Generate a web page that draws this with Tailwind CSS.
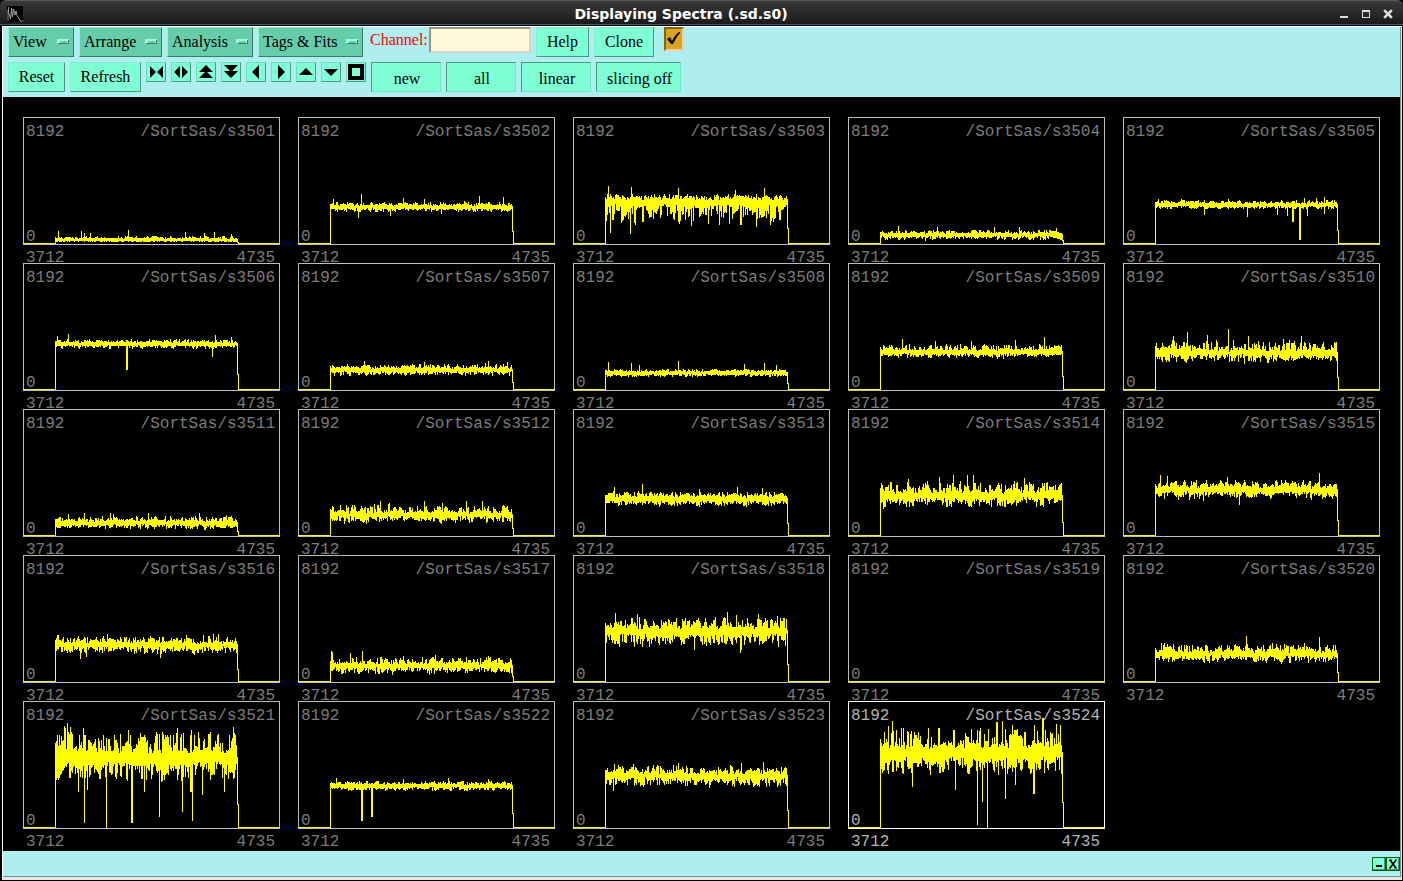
<!DOCTYPE html>
<html lang="en">
<head>
  <meta charset="UTF-8" />
  <meta name="viewport" content="width=device-width, initial-scale=1.0"/>
  <title>Displaying Spectra (.sd.s0)</title>
  <script src="https://cdn.jsdelivr.net/npm/@tailwindcss/browser@4"></script>
</head>
<body class="bg-black min-h-screen flex flex-col font-['Liberation_Serif',serif] text-[16px] text-black">

  <!-- Title bar -->
  <header class="h-[26px] flex items-center pl-[7px] pr-[10px] rounded-t-md border-t border-[#5a5a5a] bg-linear-to-b from-[#3a3a3a] to-[#181818] shadow-[inset_0_-1px_0_#000,inset_0_-2px_0_#3f5878]">
    <svg class="w-4 h-4" viewBox="0 0 16 16">
      <rect width="16" height="16" fill="#000"/>
      <path d="M1 15V4M1.500 1V6L3.500 13L4.500 2L5.500 11L6.500 3L8 9L9 5L10 10L12 12L13 15H16" fill="none" stroke="#bbb" stroke-width="0.800"/>
    </svg>
    <h1 class="flex-1 text-center text-white font-bold text-[14px] leading-5 font-['DejaVu_Sans',sans-serif]">Displaying Spectra (.sd.s0)</h1>
    <div class="flex gap-3">
      <button aria-label="Minimize">
        <svg class="w-[10px] h-[10px]" viewBox="0 0 10 10" shape-rendering="crispEdges"><path d="M1 7h8v2H1z" fill="#ddd"/></svg>
      </button>
      <button aria-label="Maximize">
        <svg class="w-[10px] h-[10px]" viewBox="0 0 10 10" shape-rendering="crispEdges"><path d="M1 1h8v8H1zM2 3v5h6V3z" fill="#ddd" fill-rule="evenodd"/></svg>
      </button>
      <button aria-label="Close">
        <svg class="w-[10px] h-[10px]" viewBox="0 0 10 10"><path d="M2 2l6 6M8 2l-6 6" stroke="#ddd" stroke-width="2.500" stroke-linecap="square"/></svg>
      </button>
    </div>
  </header>

  <div class="flex-1 flex flex-col ml-[2px] mr-px mb-px border-t border-l border-t-white border-l-white border-r border-r-[#e8e8e8] border-b-3 border-b-[#e8e8e8]">
    <div class="flex-1 flex flex-col border-r border-b border-[#6c9292] bg-[#afeeee]">

      <!-- Toolbar -->
      <div class="pl-[5px] pb-[5px] flex flex-col gap-[5px]">
        <div class="flex gap-[5px] items-start">
          <button class="h-[30px] w-[66px] pl-1 pr-1 flex items-center justify-between bg-[#66cdaa] border border-t-[#8fe6ca] border-l-[#a3f0d8] border-b-[#3d7b66] border-r-[#3d7b66]">View
            <svg class="w-3 h-[6px]" viewBox="0 0 12 6" shape-rendering="crispEdges"><path d="M0 0h12v5H0z" fill="#a3f5e8"/><path d="M3 2h7v2H3z" fill="#66cdaa"/><path d="M11 1h1v4H1V4h10z" fill="#3d7b66"/></svg>
          </button>
          <button class="h-[30px] w-[83px] pl-1 pr-1 flex items-center justify-between bg-[#66cdaa] border border-t-[#8fe6ca] border-l-[#a3f0d8] border-b-[#3d7b66] border-r-[#3d7b66]">Arrange
            <svg class="w-3 h-[6px]" viewBox="0 0 12 6" shape-rendering="crispEdges"><path d="M0 0h12v5H0z" fill="#a3f5e8"/><path d="M3 2h7v2H3z" fill="#66cdaa"/><path d="M11 1h1v4H1V4h10z" fill="#3d7b66"/></svg>
          </button>
          <button class="h-[30px] w-[86px] pl-1 pr-1 flex items-center justify-between bg-[#66cdaa] border border-t-[#8fe6ca] border-l-[#a3f0d8] border-b-[#3d7b66] border-r-[#3d7b66]">Analysis
            <svg class="w-3 h-[6px]" viewBox="0 0 12 6" shape-rendering="crispEdges"><path d="M0 0h12v5H0z" fill="#a3f5e8"/><path d="M3 2h7v2H3z" fill="#66cdaa"/><path d="M11 1h1v4H1V4h10z" fill="#3d7b66"/></svg>
          </button>
          <button class="h-[30px] w-[105px] pl-1 pr-1 flex items-center justify-between bg-[#66cdaa] border border-t-[#8fe6ca] border-l-[#a3f0d8] border-b-[#3d7b66] border-r-[#3d7b66]">Tags &amp; Fits
            <svg class="w-3 h-[6px]" viewBox="0 0 12 6" shape-rendering="crispEdges"><path d="M0 0h12v5H0z" fill="#a3f5e8"/><path d="M3 2h7v2H3z" fill="#66cdaa"/><path d="M11 1h1v4H1V4h10z" fill="#3d7b66"/></svg>
          </button>
          <div class="flex items-center w-[163px] pl-[2px] justify-between">
            <label for="channel" class="text-[#ff0000]">Channel:</label>
            <input id="channel" type="text" class="h-[26px] w-[102px] px-1 bg-[#fff8dc] border-2 border-t-[#999584] border-l-[#999584] border-b-[#d8d2cc] border-r-[#d8d2cc] outline-none">
          </div>
          <button class="h-[30px] w-[53px] bg-[#7fffd4] border border-[#84ecd0] border-b-[#4c997f] border-r-[#4c997f]">Help</button>
          <button class="h-[30px] w-[60px] bg-[#7fffd4] border border-[#84ecd0] border-b-[#4c997f] border-r-[#4c997f]">Clone</button>
          <label class="relative ml-[5px] h-[24px] w-[20px]">
            <input type="checkbox" checked aria-label="Channel lock" class="appearance-none block w-full h-full bg-[#daa520] border-2 border-t-[#836313] border-l-[#836313] border-b-[#f0d0a0] border-r-[#f0d0a0]">
            <svg class="absolute inset-0 w-full h-full pointer-events-none" viewBox="0 0 20 24"><path d="M3 12l3-2 2 4C10 10 12 7 15 5h1v1c-3 3-5 7-7 11H7z" fill="#000"/></svg>
          </label>
        </div>

        <div class="flex gap-[5px] items-start">
          <button class="h-[30px] w-[57px] bg-[#7fffd4] border border-[#84ecd0] border-b-[#4c997f] border-r-[#4c997f]">Reset</button>
          <button class="h-[30px] w-[71px] bg-[#7fffd4] border border-[#84ecd0] border-b-[#4c997f] border-r-[#4c997f]">Refresh</button>
          <button aria-label="Compress" class="w-5 h-5 bg-[#7fffd4] border border-[#70dfbc] border-b-[#4c997f] border-r-[#4c997f]">
            <svg class="w-full h-full" viewBox="0 0 18 18"><path d="M3 3l6 6-6 6zM16 3l-6 6 6 6z"/></svg>
          </button>
          <button aria-label="Expand" class="w-5 h-5 bg-[#7fffd4] border border-[#70dfbc] border-b-[#4c997f] border-r-[#4c997f]">
            <svg class="w-full h-full" viewBox="0 0 18 18"><path d="M8 3v12L2 9zM10 3v12l6-6z"/></svg>
          </button>
          <button aria-label="Scale up" class="w-5 h-5 bg-[#7fffd4] border border-[#70dfbc] border-b-[#4c997f] border-r-[#4c997f]">
            <svg class="w-full h-full" viewBox="0 0 18 18"><path d="M9 2l7 7H2zM9 8l7 7H2z"/></svg>
          </button>
          <button aria-label="Scale down" class="w-5 h-5 bg-[#7fffd4] border border-[#70dfbc] border-b-[#4c997f] border-r-[#4c997f]">
            <svg class="w-full h-full" viewBox="0 0 18 18"><path d="M2 2h14l-7 7zM2 8h14l-7 7z"/></svg>
          </button>
          <button aria-label="Left" class="w-5 h-5 bg-[#7fffd4] border border-[#70dfbc] border-b-[#4c997f] border-r-[#4c997f]">
            <svg class="w-full h-full" viewBox="0 0 18 18"><path d="M12 2v14L5 9z"/></svg>
          </button>
          <button aria-label="Right" class="w-5 h-5 bg-[#7fffd4] border border-[#70dfbc] border-b-[#4c997f] border-r-[#4c997f]">
            <svg class="w-full h-full" viewBox="0 0 18 18"><path d="M6 2v14l7-7z"/></svg>
          </button>
          <button aria-label="Up" class="w-5 h-5 bg-[#7fffd4] border border-[#70dfbc] border-b-[#4c997f] border-r-[#4c997f]">
            <svg class="w-full h-full" viewBox="0 0 18 18"><path d="M9 5l7 7H2z"/></svg>
          </button>
          <button aria-label="Down" class="w-5 h-5 bg-[#7fffd4] border border-[#70dfbc] border-b-[#4c997f] border-r-[#4c997f]">
            <svg class="w-full h-full" viewBox="0 0 18 18"><path d="M2 6h14l-7 7z"/></svg>
          </button>
          <button aria-label="Full view" class="w-5 h-5 bg-[#7fffd4] border border-[#70dfbc] border-b-[#4c997f] border-r-[#4c997f]">
            <svg class="w-full h-full" viewBox="0 0 18 18" shape-rendering="crispEdges"><path d="M1 1h16v16H1zM5 5v8h8V5z" fill-rule="evenodd"/></svg>
          </button>
          <button class="h-[30px] w-[70px] pt-1 pl-[2px] bg-[#7fffd4] border border-[#70e6c4] border-t-[#4c997f] border-l-[#4c997f]">new</button>
          <button class="h-[30px] w-[70px] pt-1 pl-[2px] bg-[#7fffd4] border border-[#70e6c4] border-t-[#4c997f] border-l-[#4c997f]">all</button>
          <button class="h-[30px] w-[70px] pt-1 pl-[2px] bg-[#7fffd4] border border-[#70e6c4] border-t-[#4c997f] border-l-[#4c997f]">linear</button>
          <button class="h-[30px] w-[85px] pt-1 pl-[2px] bg-[#7fffd4] border border-[#70e6c4] border-t-[#4c997f] border-l-[#4c997f]">slicing off</button>
        </div>
      </div>

      <!-- Spectra -->
      <main id="spectra" class="flex-1 bg-black pt-5 px-5 pb-1 grid grid-cols-5 gap-x-[18px] content-start font-['Liberation_Mono',monospace] text-[16px]"></main>

      <!-- Status bar -->
      <footer class="h-[25px] flex items-center justify-end">
        <button aria-label="Iconify" class="w-[14px] h-[14px] bg-[#7fffd4] border border-[#006400]">
          <svg class="w-full h-full" viewBox="0 0 12 12" shape-rendering="crispEdges"><path d="M11 0v11H0v1h12V0z" fill="#4c997f"/><path d="M3 7h6v2H3z"/></svg>
        </button>
        <button aria-label="Quit" class="w-[14px] h-[14px] bg-[#7fffd4] border border-[#006400]">
          <svg class="w-full h-full" viewBox="0 0 12 12"><path d="M11 0v11H0v1h12V0z" fill="#4c997f"/><path d="M3 2l6 8M9 2l-6 8" stroke="#000" stroke-width="1.500"/><path d="M2 2h3M8 2h2M2 10h2M7 10h3" stroke="#000"/></svg>
        </button>
      </footer>
    </div>
  </div>

  <script>
    const BASE = 126;   // zero line
    const FIRST = 32;   // first column with counts
    const LAST = 214;

    // level, noise above, noise below, peaks [x, y], dips [x, y]
    const spectra = [
      { name: 's3501', level: 122, up: 3, down: 1, peaks: [[35,114],[58,114],[61,116],[67,116],[105,113],[162,115],[181,116],[191,115],[208,117]], dips: [] },
      { name: 's3502', level: 89, up: 4, down: 4, peaks: [[35,82],[63,77],[105,81],[126,82],[181,79],[205,80]], dips: [[60,100],[92,98],[143,96]] },
      { name: 's3503', level: 82, up: 4, down: 24, peaks: [[35,69],[58,70],[105,71],[162,73],[191,71]], dips: [[37,115],[57,116],[118,108],[167,107],[168,107],[183,109]] },
      { name: 's3504', level: 117, up: 4, down: 4, peaks: [[50,109],[89,110],[146,110],[171,110],[208,111]], dips: [] },
      { name: 's3505', level: 87, up: 4, down: 3, peaks: [[35,82],[58,82],[105,82],[181,81],[193,81],[201,80]], dips: [[81,97],[124,99],[154,97],[164,98],[169,104],[170,104],[176,122],[177,122],[184,98],[201,96]] },
      { name: 's3506', level: 80, up: 4, down: 4, peaks: [[34,73],[45,71],[192,72],[208,74]], dips: [[103,106],[104,106],[189,93]] },
      { name: 's3507', level: 106, up: 5, down: 5, peaks: [[66,98],[126,99],[190,98],[209,99]], dips: [] },
      { name: 's3508', level: 109, up: 3, down: 3, peaks: [[35,99],[58,100],[66,102],[105,98],[171,101],[191,100],[203,102]], dips: [] },
      { name: 's3509', level: 88, up: 7, down: 5, peaks: [[54,76],[87,78],[123,78],[167,77],[196,74]], dips: [] },
      { name: 's3510', level: 89, up: 11, down: 8, peaks: [[32,75],[50,73],[64,69],[84,72],[105,66],[125,73],[160,76],[178,73]], dips: [[121,100]] },
      { name: 's3511', level: 113, up: 6, down: 5, peaks: [[45,105],[61,104],[87,104],[90,105],[125,104],[176,104]], dips: [] },
      { name: 's3512', level: 105, up: 9, down: 7, peaks: [[82,92],[91,94],[126,92],[144,94],[168,92],[184,92]], dips: [] },
      { name: 's3513', level: 89, up: 6, down: 6, peaks: [[41,78],[69,75],[126,80],[164,78],[189,79]], dips: [] },
      { name: 's3514', level: 86, up: 13, down: 10, peaks: [[60,70],[91,68],[105,66],[119,66],[125,66],[176,69]], dips: [[35,99]] },
      { name: 's3515', level: 80, up: 9, down: 8, peaks: [[37,66],[44,67],[104,68],[196,64]], dips: [[80,91],[116,95]] },
      { name: 's3516', level: 89, up: 8, down: 8, peaks: [[84,79],[163,80],[190,79],[195,79]], dips: [[57,103],[63,101],[137,102]] },
      { name: 's3517', level: 110, up: 8, down: 7, peaks: [[33,96],[34,97],[52,98],[64,96],[137,100],[190,101]], dips: [] },
      { name: 's3518', level: 75, up: 14, down: 14, peaks: [[42,58],[64,59],[154,57],[163,60],[185,59]], dips: [[61,91],[76,91],[121,94],[167,97],[168,94]] },
      { name: 's3519', level: null },
      { name: 's3520', level: 98, up: 9, down: 8, peaks: [[38,88],[123,81],[149,88],[196,82]], dips: [] },
      { name: 's3521', level: 56, up: 27, down: 23, peaks: [[41,25],[42,27],[44,22],[47,26],[60,27],[105,29],[133,31],[154,27],[168,29],[210,26]], dips: [[55,90],[61,121],[64,88],[83,126],[108,121],[109,121],[121,90],[136,115],[159,110],[167,90],[168,90],[169,119],[179,93],[201,90]] },
      { name: 's3522', level: 84, up: 4, down: 4, peaks: [[38,77],[105,78],[150,77],[190,78]], dips: [[63,119],[64,119],[73,115],[74,115]] },
      { name: 's3523', level: 74, up: 10, down: 10, peaks: [[60,63],[105,62],[168,62],[190,61]], dips: [[40,89],[136,86]] },
      { name: 's3524', level: 51, up: 25, down: 22, selected: true, peaks: [[40,25],[44,20],[53,27],[80,27],[105,29],[123,28],[132,27],[148,21],[149,21],[154,20],[164,24],[167,29],[168,29],[186,24],[194,17],[195,17],[208,23],[212,24]], dips: [[64,85],[107,88],[129,123],[134,100],[139,126],[157,97],[167,83],[185,92],[186,92]] }
    ];

    function random(seed) {
      let s = seed * 7919 + 17;
      return () => {
        s = (s * 1103515245 + 12345) % 2147483648;
        return s / 2147483648;
      };
    }

    // one vertical bar per screen column, from lowest to highest count
    function tracePath(sp, seed) {
      if (sp.level === null) return `M0 ${BASE}h257v1H0z`;
      const rnd = random(seed);
      const peaks = new Map(sp.peaks);
      const dips = new Map(sp.dips);
      const drift = Math.min(4, (sp.up + sp.down) * 0.2);
      const bar = (x, y1, y2) => `M${x} ${y1}h1V${y2 + 1}h-1z`;
      let d = `M0 ${BASE}h33v1H0zM215 ${BASE}h42v1h-42z`;
      d += bar(FIRST, sp.level - Math.round(sp.up / 2), BASE);
      let high = sp.up / 2;
      let low = sp.down / 2;
      for (let x = FIRST + 1; x < LAST; x++) {
        // neighbouring columns often share the same extreme
        if (rnd() > 0.25) high = sp.up * (0.2 + 0.75 * Math.pow(rnd(), 1.5));
        if (rnd() > 0.25) low = sp.down * (0.2 + 0.75 * Math.pow(rnd(), 1.5));
        const mid = sp.level + (rnd() - 0.5) * drift;
        let top = Math.round(mid - high);
        let bottom = Math.round(mid + low + 1);
        if (peaks.has(x)) top = peaks.get(x);
        if (dips.has(x)) bottom = dips.get(x);
        d += bar(x, top, bottom);
      }
      const step = BASE - Math.round((BASE - sp.level) * 0.33);
      d += bar(LAST, sp.level, step) + bar(LAST + 1, step, BASE);
      return d;
    }

    document.getElementById('spectra').innerHTML = spectra.map((sp, i) => `
      <section class="${sp.selected ? 'text-[#b4b4b4]' : 'text-[#7c7c7c]'}">
        <div class="relative h-32 border ${sp.selected ? 'border-white' : 'border-[#bebebe]'} flex flex-col justify-between">
          <div class="flex justify-between pt-1 pl-[2px] pr-1 leading-5"><span>8192</span><span>/SortSas/${sp.name}</span></div>
          <div class="pl-[2px] leading-[14px]">0</div>
          <svg class="absolute -inset-px w-[calc(100%+2px)] h-32" viewBox="0 0 257 128" preserveAspectRatio="none" shape-rendering="crispEdges">
            <path d="${tracePath(sp, i + 1)}" fill="#ffff00"/>
          </svg>
        </div>
        <div class="flex justify-between h-[18px] pl-[3px] pr-[5px] leading-[26px]"><span>3712</span><span>4735</span></div>
      </section>`).join('');
  </script>
</body>
</html>
